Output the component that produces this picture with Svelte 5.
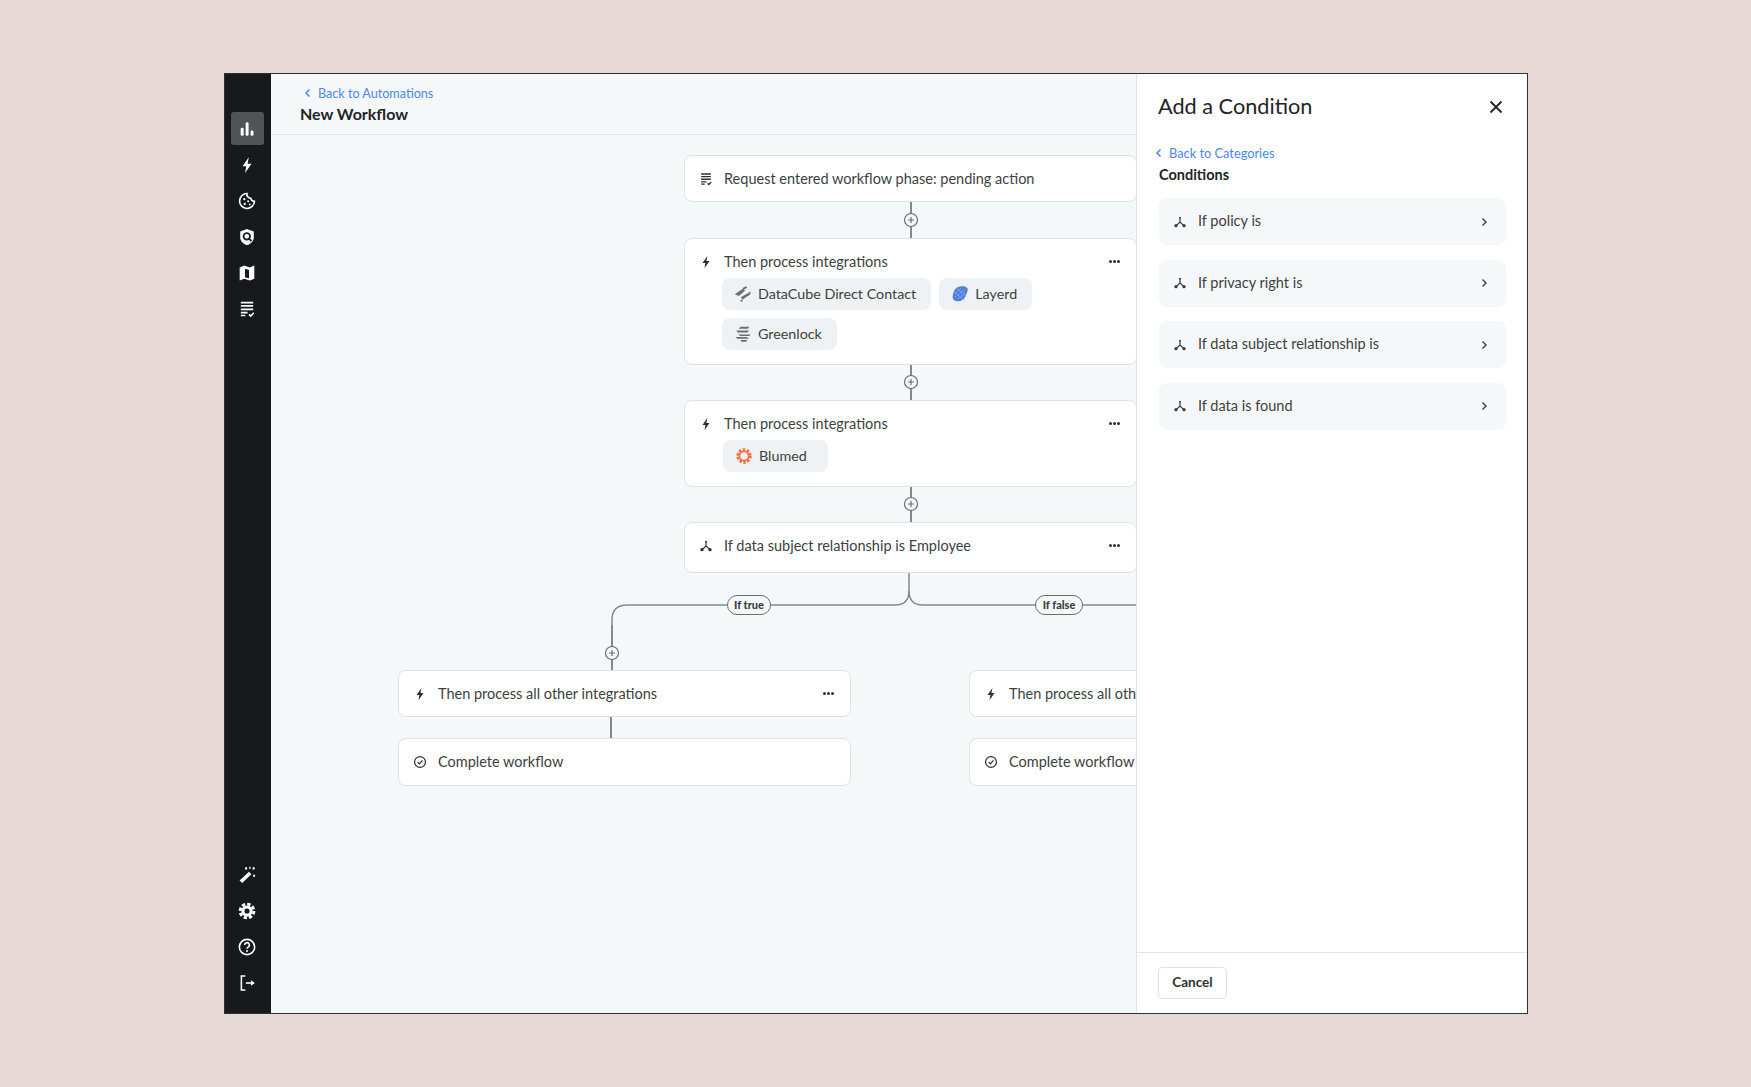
<script>
	// node positions are relative to the canvas, this is a free diagram
	const nodes = [
		{ x: 413, y: 20, h: 47, icon: 'list', text: 'Request entered workflow phase: pending action' },
		{
			x: 413, y: 103, h: 127, icon: 'bolt', text: 'Then process integrations', menu: true,
			chips: [
				{ logo: 'datacube', name: 'DataCube Direct Contact' },
				{ logo: 'layerd', name: 'Layerd' },
				{ logo: 'greenlock', name: 'Greenlock' }
			]
		},
		{
			x: 413, y: 265, h: 87, icon: 'bolt', text: 'Then process integrations', menu: true,
			chips: [{ logo: 'blumed', name: 'Blumed' }]
		},
		{ x: 413, y: 387, h: 51, icon: 'branch', text: 'If data subject relationship is Employee', menu: true },
		{ x: 127, y: 535, h: 47, icon: 'bolt', text: 'Then process all other integrations', menu: true },
		{ x: 127, y: 603, h: 48, icon: 'done', text: 'Complete workflow' },
		{ x: 698, y: 535, h: 47, icon: 'bolt', text: 'Then process all other integrations' },
		{ x: 698, y: 603, h: 48, icon: 'done', text: 'Complete workflow' }
	]

	const plusButtons = [
		{ x: 640, y: 85 },
		{ x: 640, y: 247 },
		{ x: 640, y: 369 },
		{ x: 341, y: 518 }
	]

	const conditions = ['If policy is', 'If privacy right is', 'If data subject relationship is', 'If data is found']
	const topNav = ['bars', 'bolt', 'cookie', 'shield', 'map', 'list']
	const bottomNav = ['wand', 'gear', 'help', 'logout']
</script>

{#snippet icon(name, size = 16)}
	<svg class="icon" width={size} height={size} viewBox="0 0 16 16" aria-hidden="true">
		{#if name === 'bars'}
			<rect x="2.4" y="6.8" width="2.6" height="7.2" rx="1.2" />
			<rect x="6.8" y="2" width="2.6" height="12" rx="1.2" />
			<rect x="11.2" y="9.4" width="2.6" height="4.6" rx="1.2" />
		{:else if name === 'bolt'}
			<path d="M9.6 1 4 9h3.300l-1 6 5.700-8.200H8.500z" />
		{:else if name === 'cookie'}
			<path class="line" d="M8 1.4a6.600 6.600 0 1 0 6.600 6.800 3.200 3.200 0 0 1-3.300-2.700A3.300 3.300 0 0 1 8 1.400z" />
			<circle cx="5.600" cy="6.400" r="1" /><circle cx="9" cy="8.200" r=".9" />
			<circle cx="6" cy="10.600" r="1" /><circle cx="10.400" cy="11" r=".8" />
		{:else if name === 'shield'}
			<path d="M8 .8 14 3v5.200c0 3.500-2.700 6-6 7-3.300-1-6-3.500-6-7V3z" />
			<circle class="cut" cx="7.800" cy="7.400" r="2.900" />
			<path class="cut" d="m10 9.600 2 2" />
		{:else if name === 'map'}
			<path fill-rule="evenodd" d="M1.500 3 5.500 1.400l5 1.600 4-1.600V13l-4 1.600-5-1.600-4 1.600zM6.200 4.200v7.500l3.600 1.100V5.300z" />
		{:else if name === 'list'}
			<path d="M2.500 1.500h11V3h-11zM2.500 4.500h11V6h-11zM2.500 7.500h11V9h-11zM2.500 10.500h6V12h-6zM2.500 13h4v1.500h-4z" />
			<path class="line" d="m9.800 12.800 1.500 1.500 2.700-2.900" />
		{:else if name === 'branch'}
			<path class="line" d="M8 3v5l-4 3.800M8 8l4 3.800" />
			<circle cx="8" cy="3" r="1.100" /><circle cx="3.400" cy="12.200" r="1.900" /><circle cx="12.600" cy="12.200" r="1.900" />
		{:else if name === 'done'}
			<circle class="line" cx="8" cy="8" r="6.200" />
			<path class="line" d="m5.300 8.200 2 2 3.500-4" />
		{:else if name === 'wand'}
			<path d="m9.800 5.200 2.100 2.100-8.200 7.700-2.300-2.200z" />
			<path d="M6.300 1.200h1.800V3H6.300zM13 1.200h1.800V3H13zM13.400 7.800h1.800v1.800h-1.800zM10 .6h1.100v2H10z" />
		{:else if name === 'gear'}
			<circle class="teeth" cx="8" cy="8" r="6.100" />
			<circle cx="8" cy="8" r="5" />
			<circle class="hole" cx="8" cy="8" r="2.300" />
		{:else if name === 'help'}
			<circle class="line" cx="8" cy="8" r="6.800" />
			<path class="line" d="M5.900 6.300A2.100 2.100 0 1 1 9 8.100c-.7.400-1 .8-1 1.500" />
			<circle cx="8" cy="11.600" r=".9" />
		{:else if name === 'logout'}
			<path class="line" d="M6.500 1.800H3v12.400h3.500" />
			<path class="line" d="M7 8h6" />
			<path d="m11.500 5.500 3.500 2.500-3.500 2.500z" />
		{/if}
	</svg>
{/snippet}

{#snippet logo(name)}
	<svg class="logo" width="18" height="18" viewBox="0 0 18 18" aria-hidden="true">
		{#if name === 'datacube'}
			<path fill="#6b6f72" d="M.8 9.300 8.500 4l2.600 1.500-6.300 5.400zM8.500 3l3.400-1.800 1.300 1.300-3.600 2.400zM6.800 12.200l10-5.700-.8 3.100-7.300 5zM5.800 15.800 8.800 14l-.6 3z" />
		{:else if name === 'layerd'}
			<path fill="#4f7fdc" d="M6.500 2.200c3.200-1.500 8.300-1.300 9.700.8s-.5 5.600-2 8.700-4.600 5-8.200 4.500-4.700-2.700-4.200-5.700 1.600-6.800 4.700-8.300z" />
			<path stroke="#8fafe9" stroke-width=".7" fill="none" d="M3.500 9 10 3M4 12.500 14.500 4M6.500 14.500l8-7M2.800 6.500l11 9M6 3.500l9.500 8.500" />
		{:else if name === 'greenlock'}
			<path fill="#6b6f72" d="M6.500 1.800h9L13.800 3.800H4.500zM2.500 5.600h12.500l-1.500 2H3.500zM4 9.400h12.500l-1 1.700H6zM1.500 12h11.500l1.800 1.800H3.500zM6.500 15h6.800l-1 1.800H7.500z" />
		{:else if name === 'blumed'}
			<circle cx="9" cy="9" r="6.300" fill="none" stroke="#f4703f" stroke-width="2.800" stroke-dasharray="2.400 1.560" />
			<circle cx="9" cy="9" r="4.700" fill="none" stroke="#f4703f" stroke-width="1.800" />
		{/if}
	</svg>
{/snippet}

<div class="frame">
	<nav class="sidebar">
		<div class="navgroup">
			{#each topNav as name, i}
				<div class="navitem" class:active={i === 0}>{@render icon(name, 18)}</div>
			{/each}
		</div>
		<div class="navgroup">
			{#each bottomNav as name}
				<div class="navitem">{@render icon(name, 18)}</div>
			{/each}
		</div>
	</nav>

	<main class="main">
		<header class="topbar">
			<a class="back" href="#automations">
				<svg width="8" height="10" viewBox="0 0 8 10"><path d="M5.500 1.500 2 5l3.500 3.500" /></svg>
				Back to Automations
			</a>
			<h1>New Workflow</h1>
		</header>

		<div class="canvas">
			<svg class="wires" width="866" height="878" fill="none">
				<g class="solid">
					<path d="M640 67v36M640 229v37M640 352v36M341 490v45M340 581v23" />
				</g>
				<g class="branch">
					<path d="M638 437v19q0 14-14 14H356q-15 0-15 15v14" />
					<path d="M638 456q0 14 14 14H866" />
				</g>
				{#each plusButtons as p}
					<g class="plus">
						<circle cx={p.x} cy={p.y} r="6.500" />
						<path d="M{p.x - 3} {p.y}h6M{p.x} {p.y - 3}v6" />
					</g>
				{/each}
			</svg>

			{#each nodes as node}
				<div class="node" style="left:{node.x}px;top:{node.y}px;height:{node.h}px">
					<div class="node-head">
						<span class="node-icon">{@render icon(node.icon, 14)}</span>
						<span class="node-text">{node.text}</span>
						{#if node.menu}
							<span class="dots"><i></i><i></i><i></i></span>
						{/if}
					</div>
					{#if node.chips}
						<div class="chips">
							{#each node.chips as chip}
								<span class="chip" class:wide={chip.logo === 'blumed'}>{@render logo(chip.logo)}{chip.name}</span>
							{/each}
						</div>
					{/if}
				</div>
			{/each}

			<span class="pill pill-true">If true</span>
			<span class="pill pill-false">If false</span>
		</div>
	</main>

	<aside class="panel">
		<div class="panel-body">
			<div class="panel-head">
				<h2>Add a Condition</h2>
				<svg class="close" width="14" height="14" viewBox="0 0 14 14"><path d="M1.500 1.500l11 11M12.500 1.500l-11 11" /></svg>
			</div>
			<a class="back panel-back" href="#categories">
				<svg width="8" height="10" viewBox="0 0 8 10"><path d="M5.500 1.500 2 5l3.500 3.500" /></svg>
				Back to Categories
			</a>
			<h3>Conditions</h3>
			<ul class="rows">
				{#each conditions as label}
					<li class="row">
						<span class="row-icon">{@render icon('branch', 14)}</span>
						<span class="row-text">{label}</span>
						<svg class="chev" width="8" height="10" viewBox="0 0 8 10"><path d="M2.500 1.500 6 5 2.500 8.500" /></svg>
					</li>
				{/each}
			</ul>
		</div>
		<footer class="panel-foot">
			<button class="cancel">Cancel</button>
		</footer>
	</aside>
</div>

<style>
	:global(body) {
		margin: 0;
		background: #e6d8d4;
		font-family: Lato, "Open Sans", sans-serif;
		color: #3c3f42;
	}
	.frame {
		box-sizing: border-box;
		display: flex;
		width: 1304px;
		height: 941px;
		margin: 73px 0 0 224px;
		border: 1px solid #2f3133;
		background: #fff;
		overflow: hidden;
	}
	.sidebar {
		flex: 0 0 46px;
		box-sizing: border-box;
		display: flex;
		flex-direction: column;
		justify-content: space-between;
		padding: 38px 7px 14px 6px;
		background: #17191c;
	}
	.navgroup {
		display: flex;
		flex-direction: column;
		gap: 3px;
	}
	.navitem {
		box-sizing: border-box;
		display: flex;
		align-items: center;
		justify-content: center;
		width: 33px;
		height: 33px;
		padding-right: 1px;
		border-radius: 3px;
		color: #fff;
	}
	.navitem.active {
		background: #505455;
	}
	.icon {
		display: block;
		fill: currentColor;
	}
	.icon .line {
		fill: none;
		stroke: currentColor;
		stroke-width: 1.4;
	}
	.navitem .cut,
	.navitem .hole {
		fill: #fff;
		stroke: #17191c;
		stroke-width: 1.6;
	}
	.navitem .hole {
		fill: #17191c;
		stroke: none;
	}
	.icon .teeth {
		fill: none;
		stroke: currentColor;
		stroke-width: 2.6;
		stroke-dasharray: 3 1.790;
	}
	.main {
		flex: 0 0 865px;
		display: flex;
		flex-direction: column;
		background: #f5f8f9;
		min-width: 0;
	}
	.topbar {
		box-sizing: border-box;
		flex: 0 0 61px;
		padding: 10px 0 0 29px;
		border-bottom: 1px solid #e1e5e7;
	}
	.back {
		display: flex;
		align-items: center;
		gap: 6px;
		height: 18px;
		font-size: 12.6px;
		color: #4b87ee;
		text-decoration: none;
	}
	.topbar .back {
		margin-left: 4px;
	}
	.back svg {
		fill: none;
		stroke: currentColor;
		stroke-width: 1.500;
	}
	h1 {
		margin: 1px 0 0;
		font-size: 16px;
		line-height: 22px;
		font-weight: 700;
		color: #222426;
	}
	.canvas {
		position: relative;
		flex: 1;
		overflow: hidden;
	}
	.wires {
		position: absolute;
		left: 0;
		top: 0;
	}
	.solid path {
		stroke: #5f6365;
		stroke-width: 1.500;
	}
	.branch path {
		stroke: #85898b;
		stroke-width: 1.500;
	}
	.plus circle {
		fill: #f5f8f9;
		stroke: #6a6e70;
		stroke-width: 1.200;
	}
	.plus path {
		stroke: #6a6e70;
		stroke-width: 1.200;
	}
	.node {
		position: absolute;
		box-sizing: border-box;
		width: 453px;
		background: #fff;
		border: 1px solid #dfe3e5;
		border-radius: 8px;
	}
	.node-head {
		display: flex;
		align-items: center;
		box-sizing: border-box;
		height: 45px;
		padding: 0 16px 0 14px;
	}
	.node-icon {
		flex: 0 0 25px;
		color: #2e3133;
	}
	.node-text {
		flex: 1;
		font-size: 14.5px;
		white-space: nowrap;
	}
	.dots {
		display: flex;
		gap: 1px;
	}
	.dots i {
		width: 3px;
		height: 3px;
		border-radius: 50%;
		background: #2e3133;
	}
	.chips {
		display: flex;
		flex-wrap: wrap;
		gap: 8px;
		margin-top: -6px;
		padding: 0 90px 0 37px;
	}
	.chip {
		display: flex;
		align-items: center;
		gap: 6px;
		box-sizing: border-box;
		height: 32px;
		padding: 0 15px 2px 12px;
		border-radius: 8px;
		background: #eff2f4;
		font-size: 14.3px;
	}
	.chip :global(svg) {
		margin-top: 2px;
	}
	.chip.wide {
		margin-left: 1px;
		padding-right: 21px;
	}
	.pill {
		position: absolute;
		top: 460px;
		box-sizing: border-box;
		height: 20px;
		padding: 0 6px;
		line-height: 17px;
		text-align: center;
		border: 1.200px solid #6a6e70;
		border-radius: 10px;
		background: #f5f8f9;
		font-size: 11px;
		font-weight: 900;
		white-space: nowrap;
	}
	.pill-true {
		left: 456px;
		width: 44px;
	}
	.pill-false {
		left: 764px;
		width: 48px;
	}
	.panel {
		flex: 1;
		display: flex;
		flex-direction: column;
		min-width: 0;
		border-left: 1px solid #e1e5e7;
		background: #fff;
	}
	.panel-body {
		flex: 1;
		padding: 18px 21px 0 22px;
	}
	.panel-head {
		display: flex;
		align-items: center;
		justify-content: space-between;
		height: 30px;
		padding-right: 3px;
	}
	h2 {
		margin: 0 0 3px -1px;
		font-size: 21.700px;
		font-weight: 400;
		color: #222426;
	}
	.close {
		fill: none;
		stroke: #222426;
		stroke-width: 1.800;
	}
	.panel-back {
		margin: 22px 0 0 -4px;
		font-size: 12.800px;
	}
	h3 {
		margin: 3px 0 0;
		font-size: 14.500px;
		line-height: 20px;
		font-weight: 700;
		color: #222426;
	}
	.rows {
		display: flex;
		flex-direction: column;
		gap: 14.600px;
		margin: 13px 0 0;
		padding: 0;
		list-style: none;
	}
	.row {
		display: flex;
		align-items: center;
		box-sizing: border-box;
		height: 47px;
		padding: 0 18px 0 14px;
		border-radius: 8px;
		background: #f5f8f9;
		font-size: 14.5px;
	}
	.row-icon {
		flex: 0 0 25px;
	}
	.row-text {
		flex: 1;
		padding-bottom: 2px;
	}
	.chev {
		fill: none;
		stroke: #3c3f42;
		stroke-width: 1.400;
	}
	.panel-foot {
		box-sizing: border-box;
		flex: 0 0 61px;
		padding: 14px 21px;
		border-top: 1px solid #e1e5e7;
	}
	.cancel {
		width: 69px;
		height: 32px;
		padding: 0 0 2px;
		border: 1.500px solid #dfe3e5;
		border-radius: 4px;
		background: #fff;
		font: 700 13.500px Lato, sans-serif;
		color: #2e3133;
	}
</style>
